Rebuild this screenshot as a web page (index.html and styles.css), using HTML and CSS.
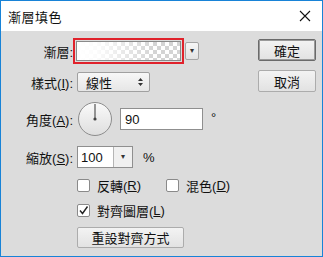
FILE: index.html
```html
<!DOCTYPE html>
<html lang="zh-Hant">
<head>
    <meta charset="UTF-8">
    <title>漸層填色</title>
    <link rel="stylesheet" href="styles.css">
</head>
<body>
    <div class="dialog">
        <div class="titlebar">
            <span class="title">漸層填色</span>
            <svg class="close" width="12" height="12" viewBox="0 0 12 12">
                <path d="M1 1 L11 11 M11 1 L1 11" stroke="#111" stroke-width="1.1" fill="none"/>
            </svg>
        </div>

        <div class="content">
            <!-- Form fields -->
            <div class="form">
                <div class="row row-gradient">
                    <span class="label">漸層:</span>
                    <div class="swatch-frame"><div class="swatch"></div></div>
                    <div class="mini-drop">&#9662;</div>
                </div>

                <div class="row row-style">
                    <span class="label">樣式(<u>I</u>):</span>
                    <div class="select">
                        <span>線性</span>
                        <svg width="7" height="10" viewBox="0 0 7 10">
                            <path d="M3.5 1 L6 4 H1 Z M3.5 9 L6 6 H1 Z" fill="#333"/>
                        </svg>
                    </div>
                </div>

                <div class="row row-angle">
                    <span class="label">角度(<u>A</u>):</span>
                    <div class="dial">
                        <svg width="36" height="36" viewBox="0 0 36 36">
                            <defs>
                                <linearGradient id="dialFill" x1="0" y1="0" x2="0" y2="1">
                                    <stop offset="0" stop-color="#fafafa"/>
                                    <stop offset="1" stop-color="#dedede"/>
                                </linearGradient>
                            </defs>
                            <circle cx="18" cy="18" r="16.5" fill="url(#dialFill)" stroke="#8c8c8c"/>
                            <line x1="18" y1="3" x2="18" y2="18" stroke="#555" stroke-width="1.2"/>
                            <circle cx="18" cy="18" r="1.6" fill="#444"/>
                        </svg>
                    </div>
                    <input class="angle-input" type="text" value="90">
                    <span class="unit degree">°</span>
                </div>

                <div class="row row-scale">
                    <span class="label">縮放(<u>S</u>):</span>
                    <div class="combo">
                        <input type="text" value="100">
                        <div class="combo-btn">&#9662;</div>
                    </div>
                    <span class="unit percent">%</span>
                </div>

                <div class="row row-checks">
                    <label class="check"><span class="box"></span>反轉(<u>R</u>)</label>
                    <label class="check check-dither"><span class="box"></span>混色(<u>D</u>)</label>
                </div>

                <div class="row row-align">
                    <label class="check">
                        <span class="box">
                            <svg width="11" height="11" viewBox="0 0 11 11">
                                <path d="M2 5.5 L4.5 8.5 L9.5 1.5" stroke="#222" stroke-width="1.4" fill="none"/>
                            </svg>
                        </span>對齊圖層(<u>L</u>)
                    </label>
                </div>

                <div class="row row-reset">
                    <button class="btn reset">重設對齊方式</button>
                </div>
            </div>

            <!-- Dialog buttons -->
            <div class="actions">
                <button class="btn default">確定</button>
                <button class="btn">取消</button>
            </div>
        </div>
    </div>
</body>
</html>
```

FILE: styles.css
```css
* {
    box-sizing: border-box;
}
body {
    margin: 0;
    font-family: "Liberation Sans", "Noto Sans CJK TC", sans-serif;
    font-size: 13px;
    color: #111;
}
.dialog {
    width: 323px;
    height: 257px;
    border: 1px solid #1883d7;
    background: #dcdcdc;
    display: flex;
    flex-direction: column;
}
.titlebar {
    height: 30px;
    background: #fff;
    display: flex;
    align-items: center;
    justify-content: space-between;
    padding: 0 11px 0 7px;
}
.title {
    font-size: 13px;
    letter-spacing: 0.5px;
}
.content {
    flex: 1;
    display: flex;
}
.form {
    flex: 1;
    display: flex;
    flex-direction: column;
}
.row {
    display: flex;
    align-items: center;
}
.label {
    width: 72px;
    margin-right: 4px;
    text-align: right;
    white-space: nowrap;
}
u {
    text-decoration: underline;
    text-underline-offset: 1px;
}
.row-gradient {
    margin-top: 6px;
    height: 28px;
}
.swatch-frame {
    margin-left: -4px;
    padding: 1px;
    border: 2px solid #e0222b;
}
.swatch {
    width: 105px;
    height: 20px;
    border: 1px solid #8a8a8a;
    background:
        linear-gradient(to right, #fff 0%, rgba(255, 255, 255, 0.9) 20%, rgba(255, 255, 255, 0) 75%),
        conic-gradient(#d4d4d4 25%, #fff 0 50%, #d4d4d4 0 75%, #fff 0) 0 0 / 8px 8px;
}
.mini-drop {
    width: 14px;
    height: 18px;
    margin-left: 1px;
    border: 1px solid #a5a5a5;
    border-radius: 2px;
    background: linear-gradient(#f6f6f6, #e3e3e3);
    font-size: 8px;
    line-height: 16px;
    text-align: center;
    color: #333;
}
.row-style {
    margin-top: 7px;
    height: 20px;
}
.select {
    width: 73px;
    height: 20px;
    border: 1px solid #a0a0a0;
    border-radius: 2px;
    background: linear-gradient(#f7f7f7, #e6e6e6);
    display: flex;
    align-items: center;
    justify-content: space-between;
    padding: 0 5px 0 8px;
}
.row-angle {
    margin-top: 10px;
    height: 34px;
}
.dial {
    width: 36px;
    height: 36px;
    margin-right: 7px;
}
.dial svg {
    display: block;
}
.angle-input {
    width: 83px;
    height: 22px;
    border: 1px solid #8f8f8f;
    padding: 0 4px;
    font: inherit;
    color: #111;
    background: #fff;
    outline: none;
}
.degree {
    margin-left: 8px;
    margin-top: -4px;
}
.row-scale {
    margin-top: 10px;
    height: 22px;
}
.combo {
    display: flex;
    height: 22px;
    width: 56px;
    border: 1px solid #8f8f8f;
    background: #fff;
}
.combo input {
    width: 35px;
    border: none;
    padding: 0 3px;
    font: inherit;
    color: #111;
    background: #fff;
    outline: none;
}
.combo-btn {
    flex: 1;
    border-left: 1px solid #b5b5b5;
    background: #f0f0f0;
    font-size: 8px;
    line-height: 20px;
    text-align: center;
    color: #333;
}
.percent {
    margin-left: 10px;
}
.row-checks {
    margin-top: 10px;
    height: 14px;
    padding-left: 76px;
}
.row-align {
    margin-top: 11px;
    height: 14px;
    padding-left: 76px;
}
.check {
    display: flex;
    align-items: center;
    white-space: nowrap;
}
.check-dither {
    margin-left: 25px;
}
.box {
    width: 13px;
    height: 13px;
    border: 1px solid #8a8a8a;
    border-radius: 2px;
    background: #fff;
    margin-right: 7px;
    display: flex;
    align-items: center;
    justify-content: center;
}
.row-reset {
    margin-top: 10px;
    padding-left: 76px;
}
.btn {
    height: 22px;
    border: 1px solid #acacac;
    border-radius: 2px;
    background: linear-gradient(#f3f3f3, #e2e2e2);
    font-family: "Liberation Sans", "Noto Sans CJK TC", sans-serif;
    font-size: 13px;
    color: #111;
    padding: 0;
}
.reset {
    width: 107px;
    height: 21px;
}
.actions {
    width: 58px;
    margin-right: 6px;
    padding-top: 8px;
    display: flex;
    flex-direction: column;
    gap: 9px;
}
.default {
    border: 1px solid #6a6a6a;
    box-shadow: inset 0 0 0 1px #9a9a9a;
}
```
